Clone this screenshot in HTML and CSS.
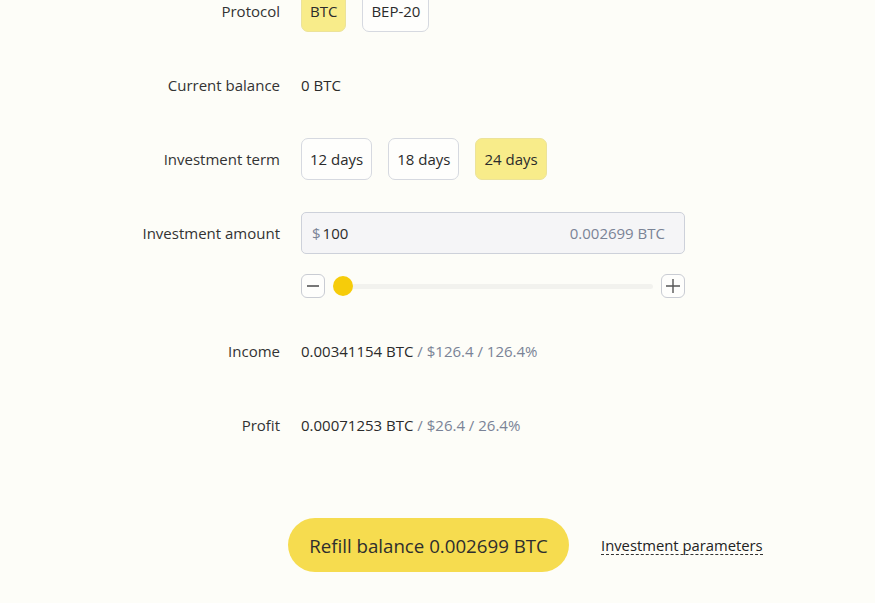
FILE: index.html
```html
<!DOCTYPE html>
<html>
<head>
<meta charset="utf-8">
<link rel="stylesheet" href="styles.css">
</head>
<body>
<div class="form">
  <div class="row">
    <div class="label">Protocol</div>
    <div class="value chips">
      <button class="chip active">BTC</button>
      <button class="chip">BEP-20</button>
    </div>
  </div>
  <div class="row">
    <div class="label">Current balance</div>
    <div class="value text">0 BTC</div>
  </div>
  <div class="row">
    <div class="label">Investment term</div>
    <div class="value chips">
      <button class="chip">12 days</button>
      <button class="chip">18 days</button>
      <button class="chip active">24 days</button>
    </div>
  </div>
  <div class="row amount-row">
    <div class="label">Investment amount</div>
    <div class="value amount">
      <div class="input">
        <span class="cur">$</span><span class="num">100</span>
        <span class="conv">0.002699 BTC</span>
      </div>
      <div class="slider">
        <button class="step"><svg width="14" height="14" viewBox="0 0 14 14"><path d="M1 7h12" stroke="#555" stroke-width="1.6"/></svg></button>
        <div class="track"><span class="thumb"></span></div>
        <button class="step"><svg width="16" height="16" viewBox="0 0 16 16"><path d="M1 8h14M8 1v14" stroke="#555" stroke-width="1.4"/></svg></button>
      </div>
    </div>
  </div>
  <div class="row">
    <div class="label">Income</div>
    <div class="value text">0.00341154 BTC <span class="muted">/ $126.4 / 126.4%</span></div>
  </div>
  <div class="row">
    <div class="label">Profit</div>
    <div class="value text">0.00071253 BTC <span class="muted">/ $26.4 / 26.4%</span></div>
  </div>
</div>
<div class="actions">
  <button class="refill">Refill balance 0.002699 BTC</button>
  <a class="params">Investment parameters</a>
</div>
</body>
</html>
```

FILE: styles.css
```css
* { box-sizing: border-box; }
html, body { margin: 0; padding: 0; }
body {
  background: #fdfdf8;
  font-family: "Open Sans", "Noto Sans", sans-serif;
  font-size: 15px;
  color: #2b2b2b;
  height: 603px;
  overflow: hidden;
}
.form {
  display: flex;
  flex-direction: column;
  gap: 32px;
  margin-top: -10px;
}
.row {
  display: grid;
  grid-template-columns: 280px 384px;
  column-gap: 21px;
  align-items: start;
}
.label {
  text-align: right;
  color: #333;
  height: 42px;
  line-height: 42px;
}
.value.text {
  height: 42px;
  line-height: 42px;
  color: #2b2b2b;
}
.muted { color: #7a8396; }
.chips { display: flex; gap: 16px; }
.chip {
  font: inherit;
  color: #2b2b2b;
  height: 42px;
  padding: 0 8px;
  border: 1px solid #d6d9e0;
  border-radius: 7px;
  background: #fefefc;
}
.chip.active {
  background: #f8ec8a;
  border-color: #ece39a;
}
.amount { display: flex; flex-direction: column; gap: 20px; }
.input {
  height: 42px;
  border: 1px solid #cdd1da;
  border-radius: 5px;
  background: #f5f5f7;
  display: flex;
  align-items: center;
  padding: 0 19px 0 10px;
}
.cur { color: #7a8396; margin-right: 2px; }
.num { color: #2b2b2b; flex: 1; }
.conv { color: #7a8396; }
.slider {
  display: flex;
  align-items: center;
  gap: 8px;
  height: 24px;
}
.step {
  width: 24px;
  height: 24px;
  padding: 0;
  border: 1px solid #c9ccd3;
  border-radius: 6px;
  background: #fefefc;
  display: flex;
  align-items: center;
  justify-content: center;
}
.track {
  flex: 1;
  height: 5px;
  border-radius: 3px;
  background: #f2f2ee;
  position: relative;
}
.thumb {
  position: absolute;
  left: 0;
  top: 50%;
  width: 20px;
  height: 20px;
  margin-top: -10px;
  border-radius: 50%;
  background: #f6cc0a;
}
.actions {
  display: flex;
  align-items: center;
  gap: 32px;
  padding-left: 288px;
  margin-top: 72px;
}
.refill {
  font: inherit;
  font-size: 18.7px;
  color: #2e2e2e;
  width: 281px;
  height: 54px;
  border: none;
  border-radius: 27px;
  background: #f6dc4f;
}
.params {
  color: #222;
  font-size: 14.8px;
  text-decoration: none;
  border-bottom: 1px dashed #333;
  line-height: 18px;
  margin-top: 1px;
}
```
